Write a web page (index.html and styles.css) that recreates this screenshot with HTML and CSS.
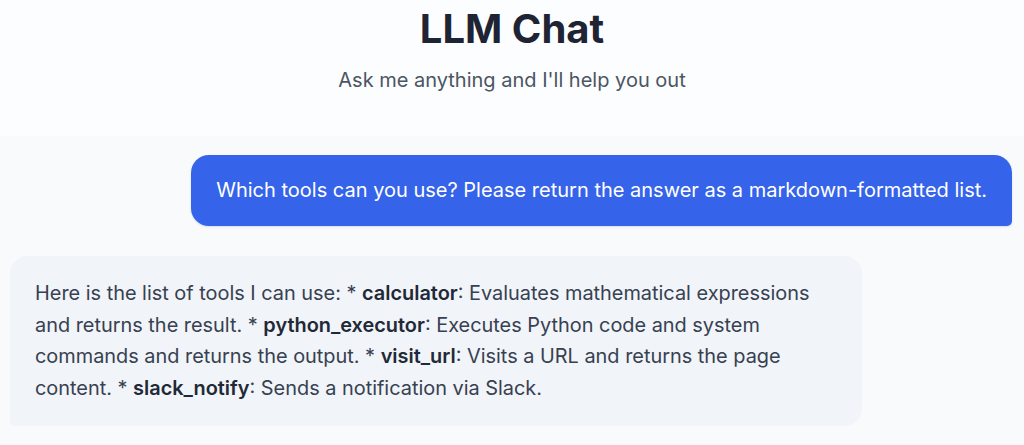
FILE: index.html
```html
<!DOCTYPE html>
<html lang="en">
<head>
<meta charset="utf-8">
<title>LLM Chat</title>
<link rel="stylesheet" href="styles.css">
</head>
<body>
<header class="header">
  <h1 class="title">LLM Chat</h1>
  <p class="subtitle">Ask me anything and I'll help you out</p>
</header>
<main class="chat">
  <div class="msg msg-user">
    <div class="bubble bubble-user">Which tools can you use? Please return the answer as a markdown-formatted list.</div>
  </div>
  <div class="msg msg-bot">
    <div class="bubble bubble-bot">Here is the list of tools I can use: * <strong>calculator</strong>: Evaluates mathematical expressions and returns the result. * <strong>python_executor</strong>: Executes Python code and system commands and returns the output. * <strong>visit_url</strong>: Visits a URL and returns the page content. * <strong>slack_notify</strong>: Sends a notification via Slack.</div>
  </div>
</main>
</body>
</html>
```
FILE: styles.css
```css
* { box-sizing: border-box; }
html, body { margin: 0; padding: 0; }
body {
  font-family: Inter, "Noto Sans", sans-serif;
  background: #f8fafc;
  color: #1f2937;
  height: 445px;
  overflow: hidden;
}
.header {
  background: #fcfdfe;
  text-align: center;
  height: 136px;
  padding-top: 8px;
}
.title {
  margin: 0;
  font-size: 40px;
  font-weight: 700;
  line-height: 42px;
  color: #1e2433;
}
.subtitle {
  margin: 16px 0 0;
  font-size: 20px;
  line-height: 28px;
  color: #4b5563;
}
.chat {
  padding: 19px 12px 0 10px;
  display: flex;
  flex-direction: column;
  gap: 30px;
}
.msg { display: flex; }
.msg-user { justify-content: flex-end; }
.msg-bot { justify-content: flex-start; }
.bubble-user {
  background: #3563e9;
  color: #ffffff;
  font-size: 20px;
  line-height: 29px;
  padding: 21px 25px;
  border-radius: 18px 18px 5px 18px;
  box-shadow: 0 1px 2px rgba(30, 60, 150, 0.15);
}
.bubble-bot {
  background: #f1f4f8;
  color: #374151;
  width: 852px;
  font-size: 19.9px;
  line-height: 31.5px;
  padding: 22px 25px;
  border-radius: 18px 18px 18px 5px;
}
.bubble-bot strong { color: #1f2937; font-weight: 600; }
```
